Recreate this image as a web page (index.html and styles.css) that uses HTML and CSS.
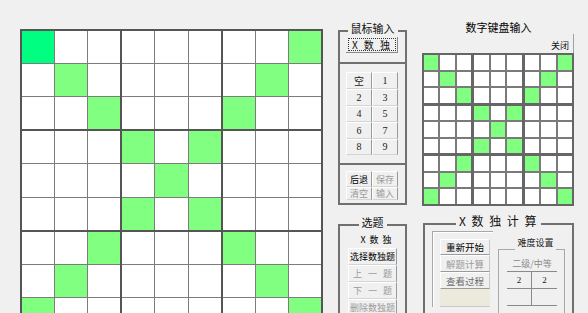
FILE: index.html
```html
<!DOCTYPE html>
<html lang="zh">
<head>
<meta charset="utf-8">
<title>X数独</title>
<link rel="stylesheet" href="styles.css">
</head>
<body>
<div class="app">
  <div class="board">
    <div class="block"><span class="cell g0"></span><span class="cell"></span><span class="cell"></span><span class="cell"></span><span class="cell g"></span><span class="cell"></span><span class="cell"></span><span class="cell"></span><span class="cell g"></span></div>
    <div class="block"><span class="cell"></span><span class="cell"></span><span class="cell"></span><span class="cell"></span><span class="cell"></span><span class="cell"></span><span class="cell"></span><span class="cell"></span><span class="cell"></span></div>
    <div class="block"><span class="cell"></span><span class="cell"></span><span class="cell g"></span><span class="cell"></span><span class="cell g"></span><span class="cell"></span><span class="cell g"></span><span class="cell"></span><span class="cell"></span></div>
    <div class="block"><span class="cell"></span><span class="cell"></span><span class="cell"></span><span class="cell"></span><span class="cell"></span><span class="cell"></span><span class="cell"></span><span class="cell"></span><span class="cell"></span></div>
    <div class="block"><span class="cell g"></span><span class="cell"></span><span class="cell g"></span><span class="cell"></span><span class="cell g"></span><span class="cell"></span><span class="cell g"></span><span class="cell"></span><span class="cell g"></span></div>
    <div class="block"><span class="cell"></span><span class="cell"></span><span class="cell"></span><span class="cell"></span><span class="cell"></span><span class="cell"></span><span class="cell"></span><span class="cell"></span><span class="cell"></span></div>
    <div class="block"><span class="cell"></span><span class="cell"></span><span class="cell g"></span><span class="cell"></span><span class="cell g"></span><span class="cell"></span><span class="cell g"></span><span class="cell"></span><span class="cell"></span></div>
    <div class="block"><span class="cell"></span><span class="cell"></span><span class="cell"></span><span class="cell"></span><span class="cell"></span><span class="cell"></span><span class="cell"></span><span class="cell"></span><span class="cell"></span></div>
    <div class="block"><span class="cell g"></span><span class="cell"></span><span class="cell"></span><span class="cell"></span><span class="cell g"></span><span class="cell"></span><span class="cell"></span><span class="cell"></span><span class="cell g"></span></div>
  </div>

  <div class="side">
    <fieldset class="group mouse">
      <legend>鼠标输入</legend>
      <div class="sec-top"><button class="xbtn"><span class="focus">X 数 独</span></button></div>
      <div class="sec-nums">
        <div class="numgrid">
          <button class="btn num">空</button><button class="btn num">1</button>
          <button class="btn num">2</button><button class="btn num">3</button>
          <button class="btn num">4</button><button class="btn num">5</button>
          <button class="btn num">6</button><button class="btn num">7</button>
          <button class="btn num">8</button><button class="btn num">9</button>
        </div>
      </div>
      <div class="sec-act">
        <div class="actgrid">
          <button class="btn act strong">后退</button><button class="btn act off">保存</button>
          <button class="btn act off">清空</button><button class="btn act off">输入</button>
        </div>
      </div>
    </fieldset>

    <fieldset class="group pick">
      <legend>选题</legend>
      <div class="pick-label">X 数 独</div>
      <div class="picklist">
        <button class="btn row strong">选择数独题</button>
        <button class="btn row off spaced">上 一 题</button>
        <button class="btn row off spaced">下 一 题</button>
        <button class="btn row off">删除数独题</button>
      </div>
    </fieldset>
  </div>

  <div class="right">
    <div class="kb-title">数字键盘输入</div>
    <div class="kb-bar"><button class="close">关闭</button></div>
    <div class="mini">
      <div class="block"><span class="cell g"></span><span class="cell"></span><span class="cell"></span><span class="cell"></span><span class="cell g"></span><span class="cell"></span><span class="cell"></span><span class="cell"></span><span class="cell g"></span></div>
      <div class="block"><span class="cell"></span><span class="cell"></span><span class="cell"></span><span class="cell"></span><span class="cell"></span><span class="cell"></span><span class="cell"></span><span class="cell"></span><span class="cell"></span></div>
      <div class="block"><span class="cell"></span><span class="cell"></span><span class="cell g"></span><span class="cell"></span><span class="cell g"></span><span class="cell"></span><span class="cell g"></span><span class="cell"></span><span class="cell"></span></div>
      <div class="block"><span class="cell"></span><span class="cell"></span><span class="cell"></span><span class="cell"></span><span class="cell"></span><span class="cell"></span><span class="cell"></span><span class="cell"></span><span class="cell"></span></div>
      <div class="block"><span class="cell g"></span><span class="cell"></span><span class="cell g"></span><span class="cell"></span><span class="cell g"></span><span class="cell"></span><span class="cell g"></span><span class="cell"></span><span class="cell g"></span></div>
      <div class="block"><span class="cell"></span><span class="cell"></span><span class="cell"></span><span class="cell"></span><span class="cell"></span><span class="cell"></span><span class="cell"></span><span class="cell"></span><span class="cell"></span></div>
      <div class="block"><span class="cell"></span><span class="cell"></span><span class="cell g"></span><span class="cell"></span><span class="cell g"></span><span class="cell"></span><span class="cell g"></span><span class="cell"></span><span class="cell"></span></div>
      <div class="block"><span class="cell"></span><span class="cell"></span><span class="cell"></span><span class="cell"></span><span class="cell"></span><span class="cell"></span><span class="cell"></span><span class="cell"></span><span class="cell"></span></div>
      <div class="block"><span class="cell g"></span><span class="cell"></span><span class="cell"></span><span class="cell"></span><span class="cell g"></span><span class="cell"></span><span class="cell"></span><span class="cell"></span><span class="cell g"></span></div>
    </div>

    <fieldset class="group calc">
      <legend>X 数 独 计 算</legend>
      <div class="calc-body">
        <div class="calc-left">
          <button class="btn crow strong">重新开始</button>
          <button class="btn crow off">解题计算</button>
          <button class="btn crow mid">查看过程</button>
          <div class="blank"></div>
        </div>
        <fieldset class="diff">
          <legend>难度设置</legend>
          <div class="diff-grid">
            <div class="dcell wide">二级/中等</div>
            <div class="dcell sep">2</div><div class="dcell">2</div>
            <div class="dcell sep"></div><div class="dcell"></div>
          </div>
        </fieldset>
      </div>
    </fieldset>
  </div>
</div>
</body>
</html>
```
FILE: styles.css
```css
* { box-sizing: border-box; }
html, body {
  margin: 0;
  padding: 0;
  width: 588px;
  height: 313px;
  overflow: hidden;
  background: #f0f0f0;
}
body {
  font-family: "Noto Sans CJK SC", sans-serif;
  color: #000;
}
button {
  font-family: "Liberation Serif", "Noto Sans CJK SC", serif;
  margin: 0;
  padding: 0;
  cursor: default;
  white-space: nowrap;
}
.app {
  display: flex;
  align-items: flex-start;
  padding-left: 20px;
}

/* main board */
.board {
  margin-top: 29px;
  width: 303px;
  height: 303px;
  flex: none;
  display: grid;
  grid-template-columns: repeat(3, 1fr);
  grid-template-rows: repeat(3, 1fr);
  gap: 2px;
  padding: 2px;
  background: #555;
}
.block {
  display: grid;
  grid-template-columns: repeat(3, 1fr);
  grid-template-rows: repeat(3, 1fr);
  gap: 1px;
  background: #7c7c7c;
}
.cell { background: #fff; }
.cell.g { background: #80ff80; }
.cell.g0 { background: #00ff80; }

/* group boxes */
.group {
  margin: 0;
  padding: 0;
  border: 2px solid #707070;
  min-width: 0;
}
.group > legend {
  margin: 0 auto;
  padding: 0 3px;
  font-size: 11px;
  line-height: 12px;
  transform: translateY(-3px);
  color: #111;
}

/* side column */
.side {
  flex: none;
  margin-left: 15px;
  margin-top: 25px;
  width: 69px;
  display: flex;
  flex-direction: column;
}
.sec-top {
  height: 25px;
  padding-left: 6px;
}
.xbtn {
  width: 52px;
  height: 16px;
  background: #f0f0f0;
  border: 0;
  border-right: 1px solid #8a8a8a;
  border-bottom: 1px solid #8a8a8a;
  padding: 1px 1px 1px 2px;
  display: flex;
}
.xbtn .focus {
  flex: 1;
  border: 1px dotted #333;
  font-family: "Noto Sans CJK SC", sans-serif;
  font-size: 10px;
  line-height: 11px;
  letter-spacing: 2px;
  text-align: center;
  color: #111;
}
.sec-nums {
  border-top: 2px solid #707070;
  padding: 8px 0 8px 6px;
}
.numgrid, .actgrid {
  width: 52px;
  display: grid;
  grid-template-columns: 1fr 1fr;
}
.numgrid {
  height: 83px;
  grid-template-rows: repeat(5, 1fr);
}
.btn {
  background: #f0f0f0;
  border: 0;
  border-top: 1px solid #fff;
  border-left: 1px solid #fff;
  border-right: 1px solid #9a9a9a;
  border-bottom: 1px solid #d4d4d4;
  font-size: 10px;
  color: #000;
  display: flex;
  align-items: center;
  justify-content: center;
}
.num { font-size: 10px; color: #222; }
.sec-act {
  border-top: 2px solid #707070;
  padding: 6px 0 3px 6px;
}
.actgrid {
  grid-template-rows: 16px 13px;
}
.act {
  font-family: "Noto Sans CJK SC", sans-serif;
  font-size: 9px;
}
.strong { color: #000; }
.off { color: #9a9a9a; }
.mid { color: #6a6a6a; }
.spaced { letter-spacing: 2px; padding-left: 2px; }

.pick {
  margin-top: 14px;
  height: 120px;
}
.pick-label {
  height: 17px;
  line-height: 17px;
  font-size: 9px;
  text-align: center;
  padding-left: 8px;
  letter-spacing: 1px;
}
.picklist {
  padding-left: 8px;
  display: flex;
  flex-direction: column;
}
.row {
  width: 49px;
  height: 17px;
  font-family: "Noto Sans CJK SC", sans-serif;
  font-size: 9px;
}

/* right column */
.right {
  flex: none;
  margin-left: 15px;
  margin-top: 20px;
  width: 153px;
  display: flex;
  flex-direction: column;
}
.kb-title {
  height: 14px;
  line-height: 14px;
  font-size: 11px;
  text-align: center;
}
.kb-bar {
  height: 19px;
  display: flex;
  justify-content: flex-end;
  padding-right: 1px;
}
.close {
  height: 19px;
  background: transparent;
  border: 0;
  border-right: 1px solid #a0a0a0;
  padding: 4px 4px 0 4px;
  font-family: "Noto Sans CJK SC", sans-serif;
  font-size: 9px;
  line-height: 14px;
  color: #111;
}
.mini {
  width: 152px;
  height: 153px;
  display: grid;
  grid-template-columns: repeat(3, 1fr);
  grid-template-rows: repeat(3, 1fr);
  gap: 3px;
  padding: 2px;
  background: #666;
}
.mini .block {
  gap: 2px;
  background: #7a7a7a;
}

.calc {
  margin-top: 12px;
  margin-left: 1px;
  width: 151px;
  height: 110px;
}
.calc > legend {
  font-size: 12px;
  letter-spacing: 1.5px;
}
.calc-body {
  display: flex;
  align-items: flex-start;
  padding-left: 7px;
}
.calc-left {
  margin-top: 1px;
  width: 61px;
  border-top: 1px solid #a8a8a8;
  border-left: 1px solid #a8a8a8;
  box-shadow: inset 1px 1px 0 #fff;
  padding: 7px 0 0 7px;
  display: flex;
  flex-direction: column;
}
.crow {
  width: 50px;
  height: 17px;
  font-family: "Noto Sans CJK SC", sans-serif;
  font-size: 9.5px;
  border-bottom: 1px solid #9a9a9a;
  border-right: 1px solid #c8c8c8;
}
.crow:first-child { height: 16px; }
.blank {
  width: 50px;
  height: 18px;
  background: #ebeadc;
  border-bottom: 1px solid #c8c8c8;
}
.diff {
  margin: 14px 0 0 5px;
  padding: 2px 0 0 8px;
  width: 67px;
  height: 80px;
  border: 1px solid #a8a8a8;
  min-width: 0;
}
.diff > legend {
  margin: 0 auto;
  padding: 0 2px;
  font-size: 9px;
  line-height: 10px;
  transform: translateY(-6px);
  color: #222;
}
.diff-grid {
  width: 50px;
  display: grid;
  grid-template-columns: 1fr 1fr;
  grid-template-rows: 16px 17px 17px;
}
.dcell {
  border-bottom: 1px solid #8a8a8a;
  font-family: "Liberation Serif", "Noto Sans CJK SC", serif;
  font-size: 9px;
  display: flex;
  align-items: center;
  justify-content: center;
  color: #222;
}
.dcell.wide {
  grid-column: 1 / 3;
  color: #8a8a8a;
  font-family: "Noto Sans CJK SC", sans-serif;
}
.dcell.sep { border-right: 1px solid #8a8a8a; }
```
